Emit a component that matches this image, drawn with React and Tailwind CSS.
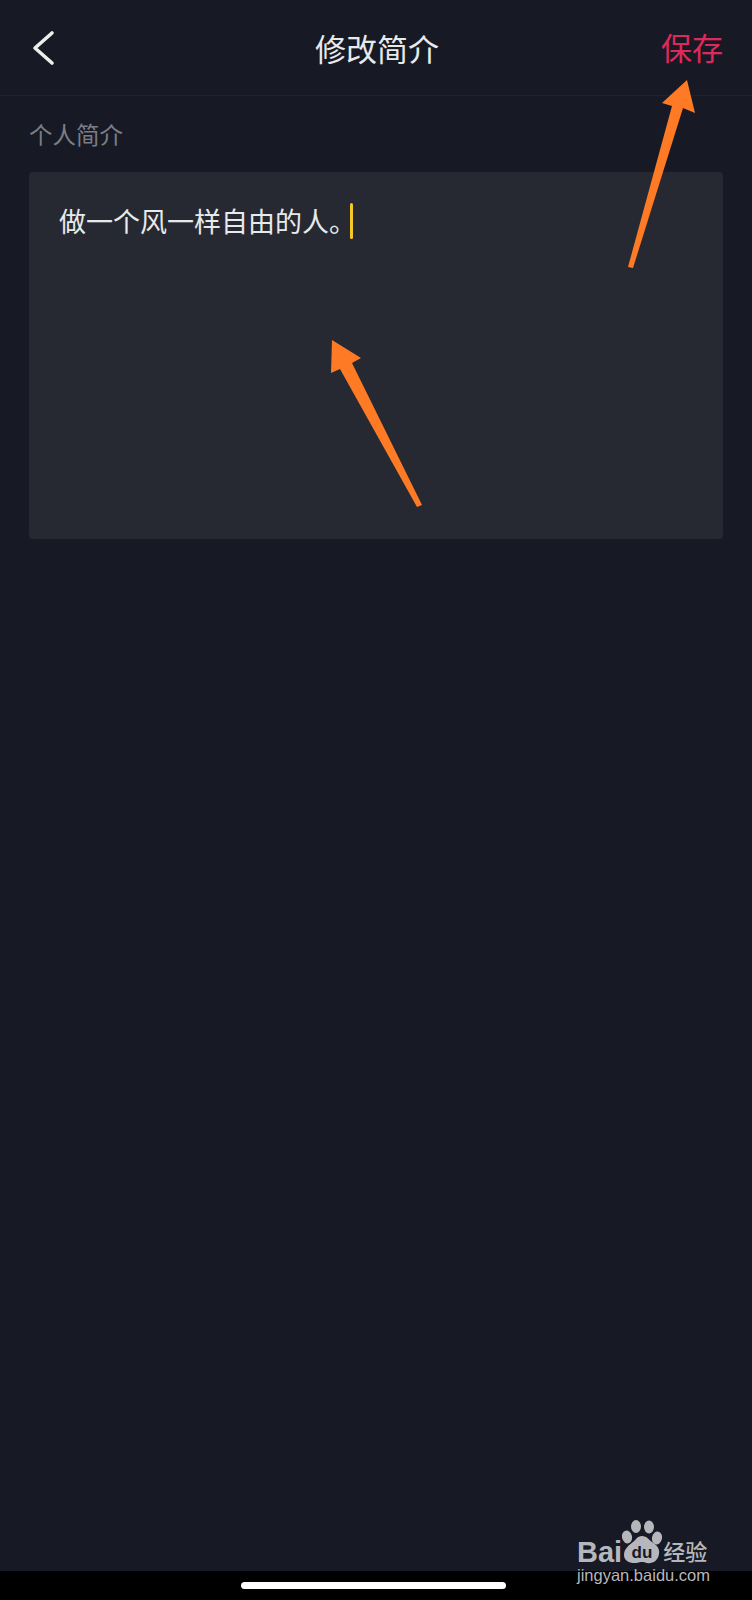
import React from 'react';

const CJK = 'font-["Noto_Sans_CJK_SC","Noto_Sans",sans-serif]';

// Baidu paw mark of the watermark
const Paw = () => (
  <svg width="40" height="44" viewBox="0 0 40 44" className="block">
    <ellipse cx="5" cy="17" rx="5" ry="6.5" transform="rotate(-12 5 17)" fill="#b6b7bc" />
    <ellipse cx="14" cy="6.5" rx="5" ry="6.5" fill="#b6b7bc" />
    <ellipse cx="27" cy="7" rx="5" ry="6.5" fill="#b6b7bc" />
    <ellipse cx="35" cy="18" rx="5" ry="6.5" transform="rotate(12 35 18)" fill="#b6b7bc" />
    <path d="M20 16c5 0 7 4 10 6 5 3 8 7 7 12-1 7-7 10-12 9-2-.4-3-1-5-1s-3 .6-6 1c-6 .6-12-2-12-8 0-6 5-10 9-13 3-2 4-6 9-6z" fill="#b6b7bc" />
    <text x="20" y="38" textAnchor="middle" fontFamily="Liberation Sans, sans-serif" fontSize="17" fontWeight="700" fill="#171a25">du</text>
  </svg>
);

export default function App() {
  return (
    <div className={`relative flex h-[1600px] w-[752px] flex-col overflow-hidden bg-[#171a25] ${CJK}`}>
      <header className="flex h-[96px] items-center border-b border-[#1f222c] pl-[31px] pr-[29px]">
        <div className="flex-1">
          <svg width="24" height="36" viewBox="0 0 24 36" className="block">
            <polyline points="21,3 4,18 21,33" fill="none" stroke="#eceded" strokeWidth="3.6" strokeLinecap="round" strokeLinejoin="round" />
          </svg>
        </div>
        <h1 className="text-[31px] font-normal leading-none text-[#e8e9ea]">修改简介</h1>
        <div className="flex-1 text-right">
          <span className="text-[31px] leading-none text-[#e0295b]">保存</span>
        </div>
      </header>

      <main className="flex-1 px-[29px]">
        <p className="mt-[25px] text-[23.5px] leading-[26px] text-[#7b7e85]">个人简介</p>
        <div className="mt-[25px] h-[367px] rounded-[4px] bg-[#262932] pl-[30px] pt-[27px]">
          <div className="flex items-center text-[27px] leading-[44px] text-[#e8e9ea]">
            <span>做一个风一样自由的人。</span>
            <span className="-ml-[6px] h-[36px] w-[3px] rounded-[2px] bg-[#f5c827]" />
          </div>
        </div>
      </main>

      <footer className="flex h-[29px] items-start bg-black pl-[241px] pt-[11px]">
        <div className="h-[7px] w-[265px] rounded-full bg-white" />
      </footer>

      {/* orange annotation arrows */}
      <svg width="752" height="1600" viewBox="0 0 752 1600" className="pointer-events-none absolute left-0 top-0">
        <polygon points="687,80 695,113 683,108 633,268 628,267 672,106 662,103" fill="#fe7a25" />
        <polygon points="332,340 361,358 352,363 422,505 417,507 340,369 331,373" fill="#fe7a25" />
      </svg>

      {/* Baidu watermark */}
      <div className="absolute left-[577px] top-[1520px] w-[135px] text-[#b6b7bc]">
        <div className="flex h-[44px] items-end">
          <span className="font-['Liberation_Sans',sans-serif] text-[29px] font-bold leading-[24px]">Bai</span>
          <Paw />
          <span className="mb-[2px] ml-[1px] text-[22px] font-medium leading-[24px] whitespace-nowrap">经验</span>
        </div>
        <p className="mt-[2px] font-['Liberation_Sans',sans-serif] text-[16.5px] leading-[18px] whitespace-nowrap">jingyan.baidu.com</p>
      </div>
    </div>
  );
}
